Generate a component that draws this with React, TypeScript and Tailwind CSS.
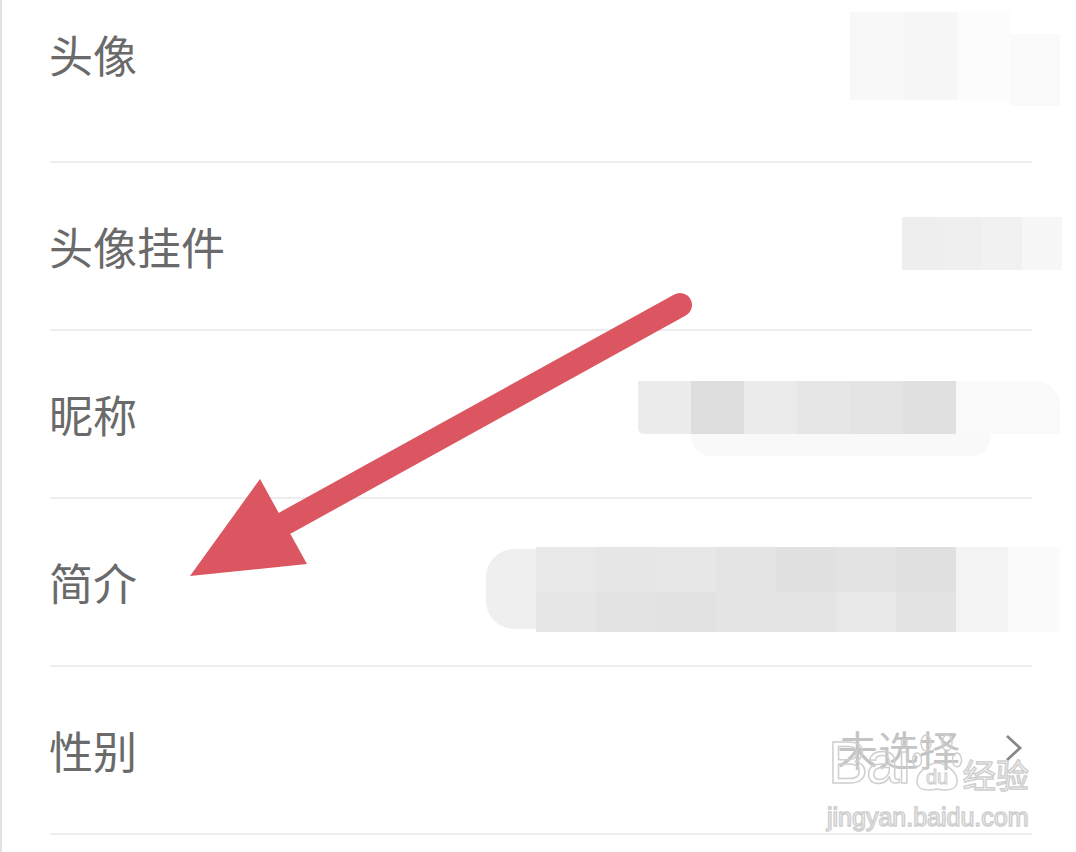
import { ReactNode } from 'react'

const font = "font-['Noto_Sans_CJK_SC','Noto_Sans',sans-serif]"

function Blocks({ colors, w, h }: { colors: string[]; w: number; h: number }) {
  // mosaic cells of a pixelated (blurred) value
  return (
    <div className="flex">
      {colors.map((c, i) => (
        <div key={i} style={{ backgroundColor: c, width: w, height: h }} />
      ))}
    </div>
  )
}

function Row({ label, children, first }: { label: string; children?: ReactNode; first?: boolean }) {
  return (
    <div className="flex flex-col">
      <div
        className={
          first
            ? 'h-[161px] flex items-start justify-between pl-[47px] pt-[24px]'
            : 'h-[166px] flex items-center justify-between pl-[47px]'
        }
      >
        <span className={`text-[44px] leading-[60px] text-[#6a6a6a] ${font}`}>{label}</span>
        {children}
      </div>
      <div className="h-[2px] bg-[#ededed] ml-[48px] mr-[44px]" />
    </div>
  )
}

function Watermark() {
  const stroke = 'text-transparent [-webkit-text-stroke:1.5px_#cfcfcf]'
  return (
    <div className="absolute left-[826px] top-[733px] flex flex-col pointer-events-none">
      <div className="flex items-end h-[60px]">
        <span className={`text-[60px] leading-none tracking-[-2px] font-['Liberation_Sans',sans-serif] ${stroke}`}>Bai</span>
        <svg width="52" height="60" viewBox="0 0 52 60" className="ml-[2px]">
          <g fill="none" stroke="#cfcfcf" strokeWidth="1.5">
            <ellipse cx="15" cy="10" rx="5" ry="8" />
            <ellipse cx="36" cy="10" rx="5" ry="8" />
            <ellipse cx="6" cy="27" rx="4.5" ry="7" />
            <ellipse cx="46" cy="27" rx="4.5" ry="7" />
            <path d="M6 50 C 5 39, 18 30, 26 30 C 34 30, 48 39, 46 50 C 45 57, 36 58, 26 56 C 16 58, 7 57, 6 50 Z" />
          </g>
          <text x="26" y="51" textAnchor="middle" fontSize="20" fontFamily="Liberation Sans, sans-serif" fill="none" stroke="#cfcfcf" strokeWidth="1.1">
            du
          </text>
        </svg>
        <span className={`text-[33px] leading-none mb-[2px] ${font} ${stroke}`}>经验</span>
      </div>
      <span className={`text-[25px] leading-none mt-[12px] ml-[-1px] font-['Liberation_Sans',sans-serif] ${stroke}`}>
        jingyan.baidu.com
      </span>
    </div>
  )
}

function Arrow() {
  return (
    <svg className="absolute left-0 top-0 pointer-events-none" width="1076" height="852">
      <line x1="678" y1="305" x2="285" y2="522" stroke="#db5661" strokeWidth="24" strokeLinecap="round" />
      <polygon points="188,576 258,479 305,564" fill="#db5661" />
    </svg>
  )
}

export default function App() {
  return (
    <div className="relative w-[1076px] h-[852px] overflow-hidden bg-white border-l-2 border-[#e2e2e2]">
      <Row label="头像" first>
        <div className="flex items-start mt-[-12px] mr-[16px]">
          <Blocks colors={['#f8f8f8', '#f7f7f7']} w={54} h={88} />
          <div className="w-[52px] h-[88px] bg-[#fcfcfc]" />
          <div className="mt-[22px]">
            <Blocks colors={['#fafafa']} w={50} h={72} />
          </div>
        </div>
      </Row>
      <Row label="头像挂件">
        <div className="mr-[14px] mt-[-6px]">
          <Blocks colors={['#eeeeee', '#efefef', '#f1f1f1', '#f7f7f7']} w={40} h={53} />
        </div>
      </Row>
      <Row label="昵称">
        <div className="flex flex-col mr-[16px] mt-[8px]">
          <div className="flex items-center">
            <div className="rounded-bl-[6px] overflow-hidden">
              <Blocks colors={['#ececec', '#dedede', '#ebebeb', '#e6e6e6', '#e4e4e4', '#e0e0e0']} w={53} h={53} />
            </div>
            <div className="w-[104px] h-[53px] bg-[#fafafa] rounded-tr-[24px]" />
          </div>
          <div className="ml-[53px] w-[300px] h-[22px] bg-[#f9f9f9] rounded-b-[20px]" />
        </div>
      </Row>
      <Row label="简介">
        <div className="flex items-center mr-[16px] mt-[14px]">
          <div className="w-[50px] h-[80px] bg-[#efefef] rounded-l-[28px]" />
          <div className="flex flex-col">
            <Blocks colors={['#e8e8e8', '#e6e6e6', '#e7e7e7', '#e4e4e4', '#e1e1e1', '#e3e3e3', '#e0e0e0']} w={60} h={45} />
            <Blocks colors={['#e6e6e6', '#e3e3e3', '#e2e2e2', '#e5e5e5', '#e4e4e4', '#e8e8e8', '#e3e3e3']} w={60} h={40} />
          </div>
          <Blocks colors={['#f3f3f3', '#fbfbfb']} w={52} h={85} />
        </div>
      </Row>
      <Row label="性别">
        <div className="flex items-center mr-[52px] mt-[-4px]">
          <span className={`text-[41px] leading-[60px] text-[#c4c4c4] ${font}`}>未选择</span>
          <svg width="20" height="28" viewBox="0 0 20 28" className="ml-[44px]">
            <polyline points="3,2 16,14 3,26" fill="none" stroke="#888" strokeWidth="2.8" />
          </svg>
        </div>
      </Row>
      <Watermark />
      <Arrow />
    </div>
  )
}
